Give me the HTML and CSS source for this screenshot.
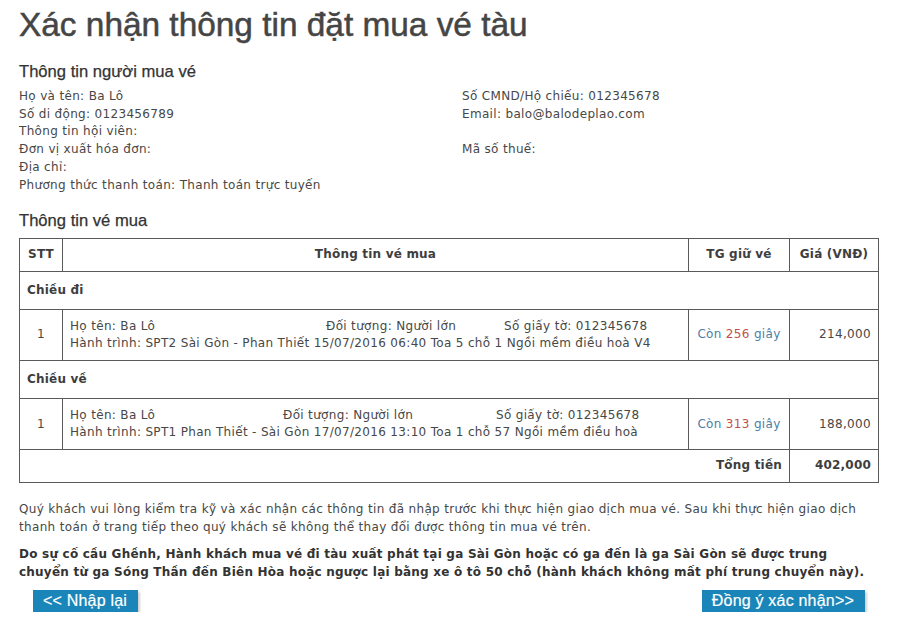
FILE: index.html
```html
<!DOCTYPE html>
<html lang="vi">
<head>
<meta charset="utf-8">
<title>Xác nhận thông tin đặt mua vé tàu</title>
<link rel="stylesheet" href="styles.css">
</head>
<body>
<div class="page">
  <h1 class="title">Xác nhận thông tin đặt mua vé tàu</h1>

  <h2 class="section">Thông tin người mua vé</h2>
  <div class="buyer">
    <div class="buyer-col buyer-left">
      <div>Họ và tên: Ba Lô</div>
      <div>Số di động: 0123456789</div>
      <div>Thông tin hội viên:</div>
      <div>Đơn vị xuất hóa đơn:</div>
      <div>Địa chỉ:</div>
      <div>Phương thức thanh toán: Thanh toán trực tuyến</div>
    </div>
    <div class="buyer-col buyer-right">
      <div>Số CMND/Hộ chiếu: 012345678</div>
      <div>Email: balo@balodeplao.com</div>
      <div>&nbsp;</div>
      <div>Mã số thuế:</div>
    </div>
  </div>

  <h2 class="section section-ticket">Thông tin vé mua</h2>
  <table class="tickets">
    <thead>
      <tr>
        <th class="c-stt">STT</th>
        <th class="c-info">Thông tin vé mua</th>
        <th class="c-time">TG giữ vé</th>
        <th class="c-price">Giá (VNĐ)</th>
      </tr>
    </thead>
    <tbody>
      <tr class="group"><td colspan="4">Chiều đi</td></tr>
      <tr class="item">
        <td class="c-stt">1</td>
        <td class="c-info">
          <div class="line1">
            <span class="w1a">Họ tên: Ba Lô</span><span class="w1b">Đối tượng: Người lớn</span><span>Số giấy tờ: 012345678</span>
          </div>
          <div>Hành trình: SPT2 Sài Gòn - Phan Thiết 15/07/2016 06:40 Toa 5 chỗ 1 Ngồi mềm điều hoà V4</div>
        </td>
        <td class="c-time"><span class="hold">Còn <span class="sec">256</span> giây</span></td>
        <td class="c-price">214,000</td>
      </tr>
      <tr class="group"><td colspan="4">Chiều về</td></tr>
      <tr class="item">
        <td class="c-stt">1</td>
        <td class="c-info">
          <div class="line1">
            <span class="w2a">Họ tên: Ba Lô</span><span class="w2b">Đối tượng: Người lớn</span><span>Số giấy tờ: 012345678</span>
          </div>
          <div>Hành trình: SPT1 Phan Thiết - Sài Gòn 17/07/2016 13:10 Toa 1 chỗ 57 Ngồi mềm điều hoà</div>
        </td>
        <td class="c-time"><span class="hold">Còn <span class="sec">313</span> giây</span></td>
        <td class="c-price">188,000</td>
      </tr>
      <tr class="total">
        <td colspan="3" class="total-label">Tổng tiền</td>
        <td class="c-price">402,000</td>
      </tr>
    </tbody>
  </table>

  <p class="note">Quý khách vui lòng kiểm tra kỹ và xác nhận các thông tin đã nhập trước khi thực hiện giao dịch mua vé. Sau khi thực hiện giao dịch thanh toán ở trang tiếp theo quý khách sẽ không thể thay đổi được thông tin mua vé trên.</p>
  <p class="note note-bold">Do sự cố cầu Ghềnh, Hành khách mua vé đi tàu xuất phát tại ga Sài Gòn hoặc có ga đến là ga Sài Gòn sẽ được trung chuyển từ ga Sóng Thần đến Biên Hòa hoặc ngược lại bằng xe ô tô 50 chỗ (hành khách không mất phí trung chuyển này).</p>

  <div class="actions">
    <button class="btn" type="button">&lt;&lt; Nhập lại</button>
    <button class="btn" type="button">Đồng ý xác nhận&gt;&gt;</button>
  </div>
</div>
</body>
</html>
```

FILE: styles.css
```css
html, body {
  margin: 0;
  padding: 0;
  background: #ffffff;
}

.page {
  width: 860px;
  padding: 0 21px 0 19px;
  font-family: "DejaVu Sans", Verdana, sans-serif;
  font-size: 12px;
  letter-spacing: 0.33px;
  line-height: 17.7px;
  color: #474747;
}

.title {
  margin: 0;
  padding-top: 6px;
  font-family: "Liberation Sans", Arial, sans-serif;
  font-size: 33.4px;
  letter-spacing: 0;
  line-height: 38px;
  font-weight: normal;
  color: #454545;
  -webkit-text-stroke: 0.5px #454545;
}

.section {
  margin: 18px 0 6px;
  font-family: "Liberation Sans", Arial, sans-serif;
  font-size: 16.6px;
  letter-spacing: 0;
  line-height: 20px;
  font-weight: normal;
  color: #333333;
  -webkit-text-stroke: 0.25px #333333;
}

.section-ticket {
  margin-top: 17px;
  margin-bottom: 7px;
}

.buyer {
  display: flex;
}

.buyer-left {
  width: 443px;
  flex: none;
}

.buyer-right {
  flex: 1;
}

.tickets {
  width: 860px;
  border-collapse: collapse;
  border: 1px solid #5a5a5a;
  color: #474747;
}

.tickets th,
.tickets td {
  border: 1px solid #5a5a5a;
  padding: 7px 7px;
  font-size: 12px;
  line-height: 17.7px;
  vertical-align: middle;
}

.tickets th {
  font-weight: bold;
  letter-spacing: 0.2px;
  color: #3e3e3e;
}

.c-stt {
  width: 28px;
  text-align: center;
}

.c-info {
  text-align: left;
}

.tickets th.c-info {
  text-align: center;
}

.c-time {
  width: 86px;
  text-align: center;
}

.c-price {
  width: 74px;
  text-align: right;
}

.tickets th.c-price {
  text-align: center;
}

.group td {
  padding: 10px 7px 9px;
  font-weight: bold;
  letter-spacing: 0.2px;
  color: #3e3e3e;
}

.item td {
  padding: 8px 7px 7px;
}

.line1 {
  display: flex;
  white-space: nowrap;
}

.w1a { width: 256px; flex: none; }
.w1b { width: 178px; flex: none; }
.w2a { width: 213px; flex: none; }
.w2b { width: 213px; flex: none; }

.hold {
  color: #4a7ea6;
}

.sec {
  color: #c0504d;
}

.total td {
  padding: 7px 7px;
  font-weight: bold;
  letter-spacing: 0.2px;
  color: #3e3e3e;
}

.total-label {
  text-align: right;
}

.note {
  margin: 17px 0 0;
  line-height: 18px;
}

.note-bold {
  margin-top: 9px;
  font-weight: bold;
  letter-spacing: 0.22px;
  color: #333333;
}

.actions {
  display: flex;
  justify-content: space-between;
  padding: 9px 14px 0;
}

.btn {
  height: 22px;
  padding: 0 11px 0 10px;
  border: 0;
  background: #1a85b8;
  color: #ffffff;
  font-family: "Liberation Sans", Arial, sans-serif;
  font-size: 16px;
  letter-spacing: 0.2px;
  line-height: 22px;
  -webkit-text-stroke: 0.2px #ffffff;
  box-shadow: 2px 2px 2px #d0d0d0;
  cursor: pointer;
}
```
